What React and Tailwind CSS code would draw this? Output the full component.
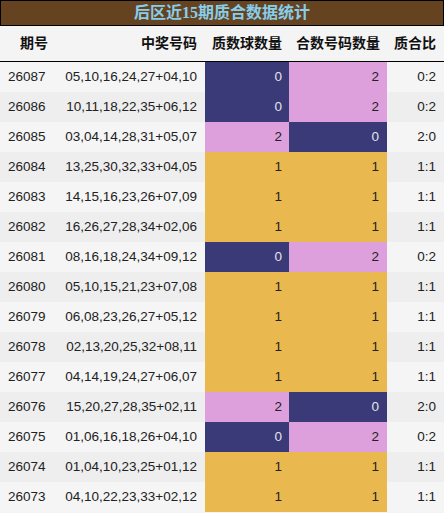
import React from "react";

const rows = [
  ["26087", "05,10,16,24,27+04,10", 0, 2],
  ["26086", "10,11,18,22,35+06,12", 0, 2],
  ["26085", "03,04,14,28,31+05,07", 2, 0],
  ["26084", "13,25,30,32,33+04,05", 1, 1],
  ["26083", "14,15,16,23,26+07,09", 1, 1],
  ["26082", "16,26,27,28,34+02,06", 1, 1],
  ["26081", "08,16,18,24,34+09,12", 0, 2],
  ["26080", "05,10,15,21,23+07,08", 1, 1],
  ["26079", "06,08,23,26,27+05,12", 1, 1],
  ["26078", "02,13,20,25,32+08,11", 1, 1],
  ["26077", "04,14,19,24,27+06,07", 1, 1],
  ["26076", "15,20,27,28,35+02,11", 2, 0],
  ["26075", "01,06,16,18,26+04,10", 0, 2],
  ["26074", "01,04,10,23,25+01,12", 1, 1],
  ["26073", "04,10,22,23,33+02,12", 1, 1],
];

// colour of a count cell
const cellColor = (n) => {
  if (n === 0) return "bg-[#3a3a78] text-[#e4e4e4]";
  if (n === 2) return "bg-[#dda0dd] text-[#222]";
  return "bg-[#e9b94f] text-[#222]";
};

const cols = "grid grid-cols-[55px_150px_84px_98px_57px]";

export default function App() {
  return (
    <div className="w-[444px] h-[513px] overflow-hidden bg-[#f4f4f4] font-['Liberation_Sans','Noto_Sans_CJK_SC',sans-serif]">
      <div className="h-[26px] bg-[#654321] border border-black flex items-center justify-center">
        <span className="text-[16px] font-bold text-[#87ceeb] font-['Liberation_Serif','Noto_Sans_CJK_SC',serif] leading-none">
          后区近15期质合数据统计
        </span>
      </div>
      <div className={`${cols} h-[36px] border-b border-black items-center text-[14px] font-bold text-[#111]`}>
        <div className="pl-[20px]">期号</div>
        <div className="text-right pr-[8px]">中奖号码</div>
        <div className="text-right pr-[7px]">质数球数量</div>
        <div className="text-right pr-[7px]">合数号码数量</div>
        <div className="text-right pr-[8px]">质合比</div>
      </div>
      {rows.map(([issue, nums, p, c], i) => (
        <div
          key={issue}
          className={`${cols} h-[30px] text-[13.5px] text-[#222] ${i % 2 === 0 ? "bg-[#f5f5f5]" : "bg-[#eeeeee]"}`}
        >
          <div className="flex items-center pl-[8px]">{issue}</div>
          <div className="flex items-center justify-end pr-[8px]">{nums}</div>
          <div className={`flex items-center justify-end pr-[7px] ${cellColor(p)}`}>{p}</div>
          <div className={`flex items-center justify-end pr-[8px] ${cellColor(c)}`}>{c}</div>
          <div className="flex items-center justify-end pr-[8px]">{`${p}:${c}`}</div>
        </div>
      ))}
    </div>
  );
}
